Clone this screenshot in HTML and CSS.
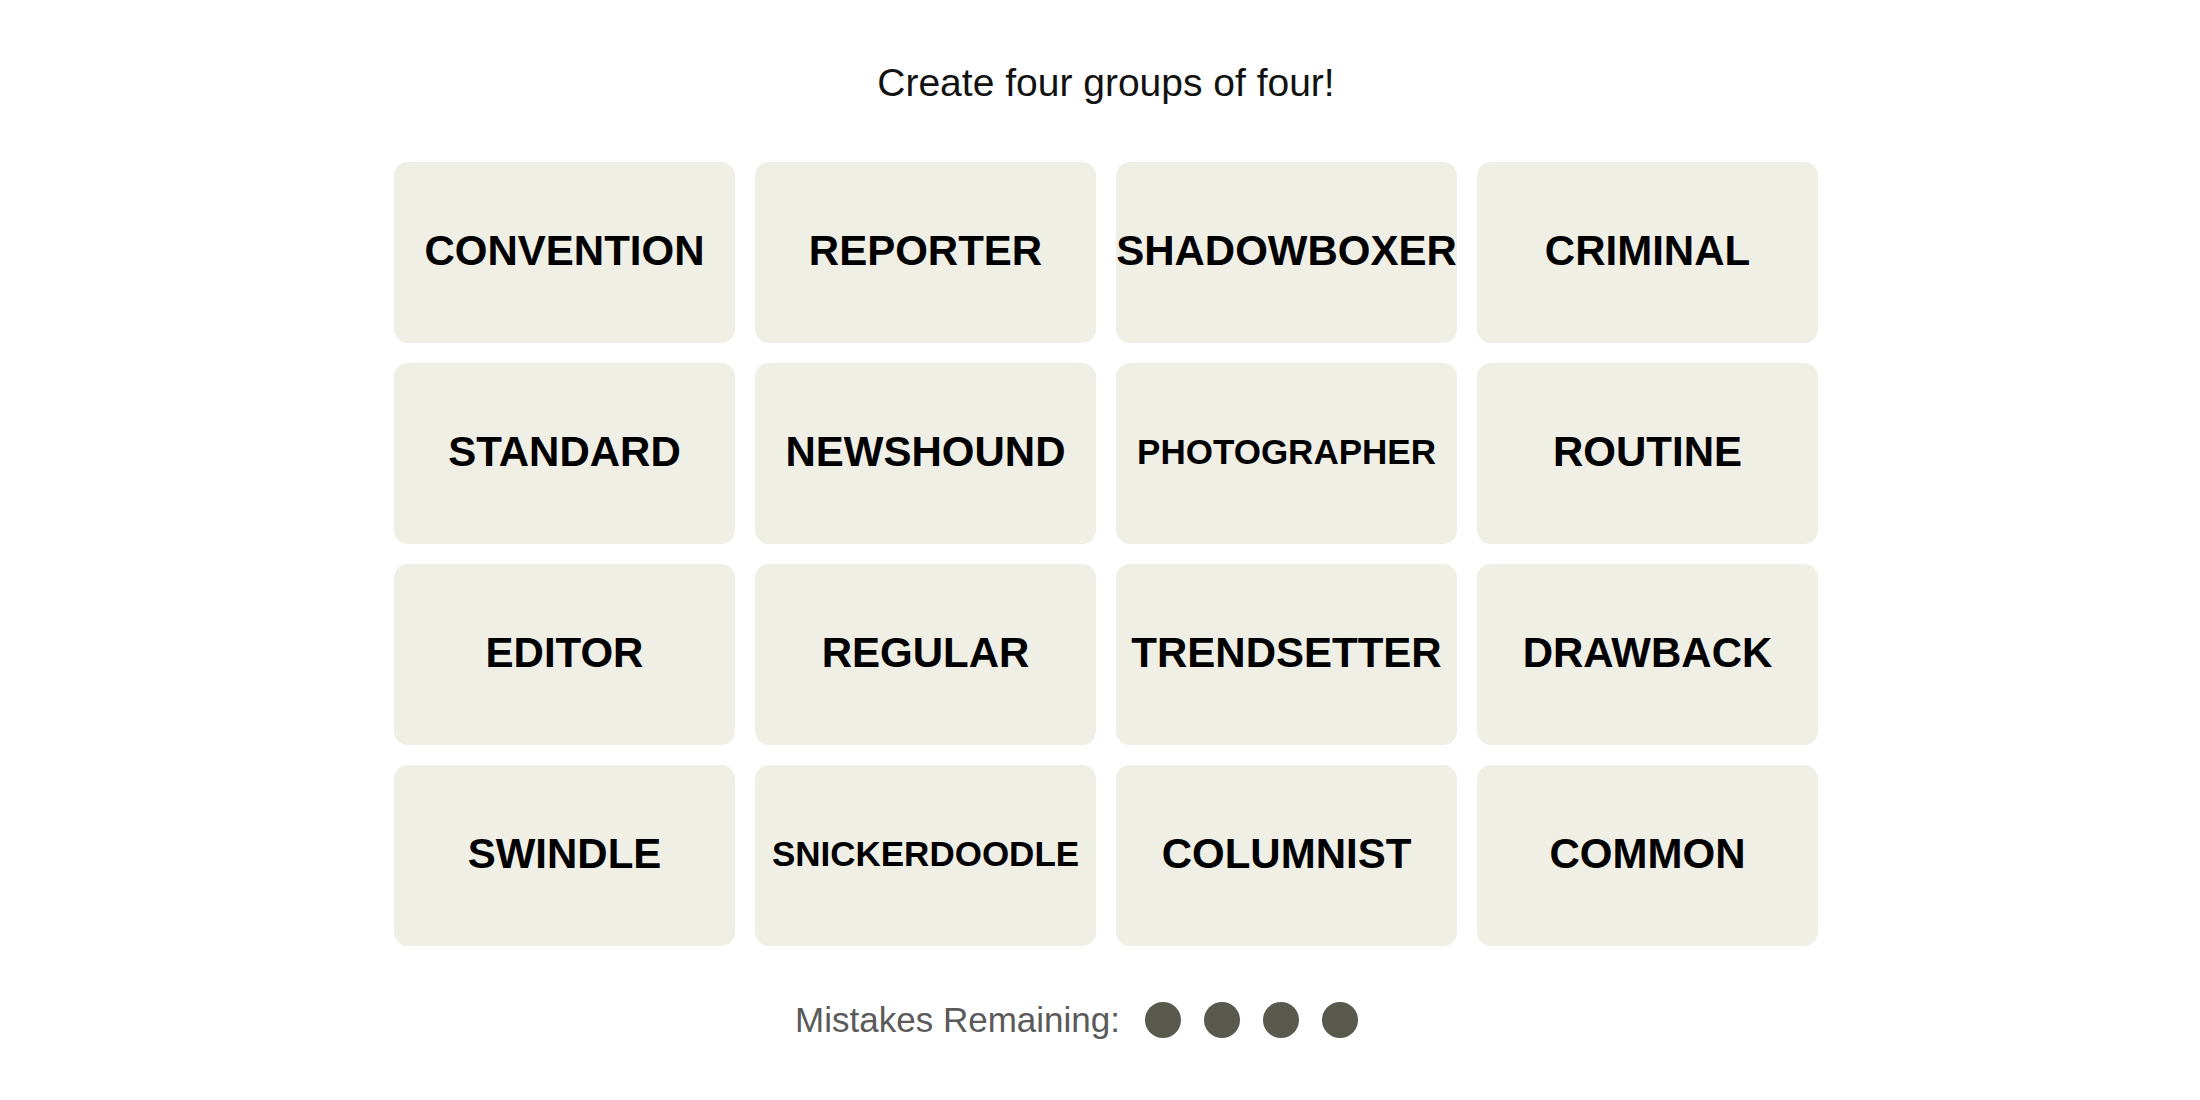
FILE: index.html
```html
<!DOCTYPE html>
<html lang="en">
<head>
    <meta charset="UTF-8">
    <meta name="viewport" content="width=device-width, initial-scale=1.0">
    <title>Connections</title>
    <link rel="stylesheet" href="styles.css">
</head>
<body>
    <main class="board">
        <p class="prompt">Create four groups of four!</p>

        <div class="grid">
            <button class="tile">CONVENTION</button>
            <button class="tile">REPORTER</button>
            <button class="tile">SHADOWBOXER</button>
            <button class="tile">CRIMINAL</button>

            <button class="tile">STANDARD</button>
            <button class="tile">NEWSHOUND</button>
            <button class="tile tile-small">PHOTOGRAPHER</button>
            <button class="tile">ROUTINE</button>

            <button class="tile">EDITOR</button>
            <button class="tile">REGULAR</button>
            <button class="tile">TRENDSETTER</button>
            <button class="tile">DRAWBACK</button>

            <button class="tile">SWINDLE</button>
            <button class="tile tile-small">SNICKERDOODLE</button>
            <button class="tile">COLUMNIST</button>
            <button class="tile">COMMON</button>
        </div>

        <div class="mistakes">
            <span class="mistakes-label">Mistakes Remaining:</span>
            <span class="dots">
                <span class="dot"></span>
                <span class="dot"></span>
                <span class="dot"></span>
                <span class="dot"></span>
            </span>
        </div>
    </main>
</body>
</html>
```

FILE: styles.css
```css
body {
    margin: 0;
    background-color: #fff;
    font-family: "Liberation Sans", Arial, sans-serif;
    color: #121212;
}

.board {
    width: 1424px;
    margin: 0 auto;
    padding-left: 12px;
    display: flex;
    flex-direction: column;
    align-items: center;
}

.prompt {
    margin: 60px 0 0;
    font-size: 39px;
    line-height: 46px;
    color: #121212;
}

.grid {
    margin-top: 56px;
    display: grid;
    grid-template-columns: repeat(4, 341px);
    grid-auto-rows: 181px;
    gap: 20px;
}

.tile {
    display: flex;
    align-items: center;
    justify-content: center;
    padding: 0 0 4px;
    border: none;
    border-radius: 14px;
    background-color: #efefe6;
    color: #000;
    font-family: "Liberation Sans", Arial, sans-serif;
    font-weight: 700;
    font-size: 42px;
    white-space: nowrap;
    cursor: pointer;
}

.tile-small {
    font-size: 35px;
}

.mistakes {
    margin-top: 51px;
    display: flex;
    align-items: center;
    gap: 25px;
    padding-right: 59px;
}

.mistakes-label {
    font-size: 35px;
    line-height: 46px;
    color: #5a5a5a;
}

.dots {
    display: flex;
    gap: 23px;
}

.dot {
    width: 36px;
    height: 36px;
    border-radius: 50%;
    background-color: #5a594e;
}
```
